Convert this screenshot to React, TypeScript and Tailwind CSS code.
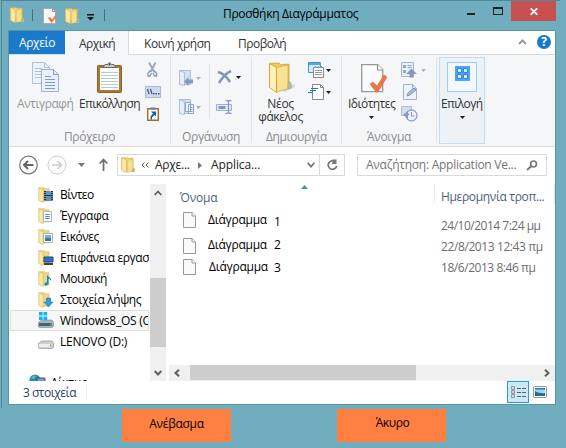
import React from "react";

type Kids = { children?: React.ReactNode };

function Label({ c = "", children }: Kids & { c?: string }) {
  return <div className={"whitespace-nowrap text-[12px] leading-[16px] " + c}>{children}</div>;
}

function Svg({ w, h, c = "", children }: Kids & { w: number; h: number; c?: string }) {
  return (
    <svg width={w} height={h} viewBox={`0 0 ${w} ${h}`} className={"block shrink-0 " + c} fill="none">
      {children}
    </svg>
  );
}

function Folder({ w = 13, h = 15, c = "" }: { w?: number; h?: number; c?: string }) {
  return (
    <svg width={w} height={h} viewBox="0 0 13 15" className={"block shrink-0 " + c}>
      <path d="M5 1h6.500v9l1.500 1v3L6 14z" fill="#e3bd4c" />
      <path d="M.5.8 6 .5l1 1 4-.5v10l-4 1H.5z" fill="#f2d57a" stroke="#d2ab42" strokeWidth=".5" />
      <path d="m.5.8 4.500 2v12L.5 12.600z" fill="#fbe9a6" stroke="#d9b650" strokeWidth=".6" />
      <path d="M6 3.200v11.300l5-1.200V2z" fill="#f7e08c" stroke="#d9b650" strokeWidth=".4" />
      <path d="M10.500 11h1.500v2.500h-1.500z" fill="#7fb4dc" />
    </svg>
  );
}

function Page({ c = "" }: { c?: string }) {
  return (
    <Svg w={13} h={16} c={c}>
      <path d="M.5.5h8.700l3.300 3.300v11.700H.5z" fill="#fafafa" stroke="#999" />
      <path d="M9 .5V4h3.500" stroke="#999" fill="#fff" />
    </Svg>
  );
}

function Down({ c = "text-[#1a1a1a]" }: { c?: string }) {
  return (
    <Svg w={5} h={3} c={c}>
      <path d="M0 0h5L2.500 3z" fill="currentColor" />
    </Svg>
  );
}

function GroupName({ c = "", children }: Kids & { c?: string }) {
  return <Label c={"mt-auto mb-[1px] text-center text-[#8c8c8e] " + c}>{children}</Label>;
}

function TitleBar() {
  return (
    <div className="flex h-[28px] items-start pl-[8px] pt-[5px]">
      <Folder w={14} h={16} />
      <div className="ml-[8px] mt-[2px] h-[12px] w-px bg-[#44717e]" />
      <Svg w={15} h={17} c="ml-[10px] mt-[1px]">
        <path d="M.5.5h9l3 3v12H.5z" fill="#f8f8f8" stroke="#aaa" />
        <path d="M9.500 .5v3h3" stroke="#999" />
        <path d="m5 10 2-1 2 2.500L12.500 7 14 8.500 8.500 15z" fill="#ea7646" />
      </Svg>
      <Folder w={14} h={16} c="ml-[7px] mt-[1px]" />
      <Svg w={7} h={7} c="ml-[8px] mt-[7px]">
        <path d="M0 0h7v1.500H0zM0 3h7L3.500 6.500z" fill="#111" />
      </Svg>
      <div className="ml-[10px] mt-[2px] h-[12px] w-px bg-[#44717e]" />
      <Label c="ml-[118px] mt-[-1px] tracking-[-0.3px] text-black">Προσθήκη Διαγράμματος</Label>
      <Svg w={8} h={2} c="ml-auto mt-[6px]">
        <path d="M0 0h8v2H0z" fill="#222" />
      </Svg>
      <div className="ml-[18px] h-[8px] w-[10px] border border-t-2 border-[#222]" />
      <div className="ml-[8px] mt-[-6px] mr-[10px] flex h-[20px] w-[45px] items-center justify-center bg-[#c75050]">
        <Svg w={8} h={7}>
          <path d="m.7.3 6.600 6.400M7.300.3.700 6.700" stroke="#fff" strokeWidth="1.700" />
        </Svg>
      </div>
    </div>
  );
}

function Tabs() {
  return (
    <div className="flex h-[24px] border-b border-[#dadbdc] bg-white">
      <div className="h-[23px] w-[56px] bg-[#1979ca] pt-[4px] text-center text-white">
        <Label c="tracking-[-0.4px]">Αρχείο</Label>
      </div>
      <div className="h-[24px] w-[64px] border-r border-[#dadbdc] bg-[#f5f6f7] pl-[14px] pt-[5px]">
        <Label c="tracking-[-0.5px] text-[#333]">Αρχική</Label>
      </div>
      <Label c="ml-[15px] mt-[5px] w-[94px] tracking-[-0.45px] text-[#333]">Κοινή χρήση</Label>
      <Label c="mt-[5px] tracking-[-0.5px] text-[#333]">Προβολή</Label>
      <Svg w={9} h={6} c="ml-auto mt-[8px]">
        <path d="m1 5 3.500-3.500L8 5" stroke="#999" strokeWidth="2" />
      </Svg>
      <div className="ml-[10px] mr-[4px] mt-[4px] flex size-[14px] items-center justify-center rounded-full bg-[#1979ca] text-[12px] font-bold leading-none text-white">
        ?
      </div>
    </div>
  );
}

function Clipboard() {
  return (
    <Svg w={25} h={31}>
      <rect x=".5" y="3.500" width="24" height="27" rx="1" fill="#a87734" stroke="#8d632b" />
      <path d="M3 6h19v22H3z" fill="#fff" />
      <path d="M4 10.500h17M4 13.500h17M4 16.500h17M4 19.500h17M4 22.500h17M4 25.500h17" stroke="#b3c9d5" />
      <path d="M6 5.500h13l-2-3h-2.500Q12.500-1 10.500 2.500H8z" fill="#ccc" stroke="#666" />
      <circle cx="12.500" cy="2.500" r="1" fill="#444" />
    </Svg>
  );
}

function ClipGroup() {
  return (
    <div className="flex h-full w-[161px] flex-col">
      <div className="flex">
        <div className="ml-[8px] mt-[7px] w-[61px]">
          <Svg w={28} h={31} c="ml-[15px]">
            <path d="M.5.500h12l5 5v16H.5z" fill="#edf3fc" stroke="#b1c1dd" />
            <path d="M12.500.5v5h5M3 6.500h7M3 9.500h7M3 12.500h7M3 15.500h7" stroke="#b1c1dd" />
            <path d="M9.500 7.500h12l5 5v17h-17z" fill="#e9f1fc" stroke="#9eb1d3" />
            <path d="M21.500 7.500v5h5M13 14.500h6M13 17.500h10M13 20.500h10M13 23.500h10M13 26.500h10" stroke="#7f98c4" />
          </Svg>
          <Label c="mt-[3px] tracking-[-0.45px] text-[#969698]">Αντιγραφή</Label>
        </div>
        <div className="mt-[7px] w-[67px]">
          <div className="ml-[19px]"><Clipboard /></div>
          <Label c="ml-[1px] mt-[3px] tracking-[-0.6px] text-[#333]">Επικόλληση</Label>
        </div>
        <div className="mt-[7px] flex flex-col">
          <Svg w={11} h={15} c="ml-[2px]">
            <path d="m2 .5 5.500 10M8.500.5 3.500 10" stroke="#9aa9c5" strokeWidth="2" />
            <path d="M3.500 8.500 1 11v3h2l1.500-3M7 8.500l2.500 2.500v3h-2L6 11" stroke="#8197bf" strokeWidth="1.300" />
          </Svg>
          <Svg w={16} h={12} c="mt-[9px]">
            <rect x=".5" y=".5" width="15" height="11" fill="#cfdaec" stroke="#aab9d4" />
            <path d="m2.500 3 1.500 5M5.500 3 7 8" stroke="#3e5482" strokeWidth="1.200" />
            <path d="M8 7h1.500v1.500H8zM10.500 7H12v1.500h-1.500zM13 7h1.500v1.500H13z" fill="#3e5482" />
          </Svg>
          <Svg w={12} h={14} c="ml-[2px] mt-[9px]">
            <path d="M.7 1.700h10.600v11.600H.7z" fill="#fff" stroke="#9a6d32" strokeWidth="1.400" />
            <path d="M3.500.500h5v2h-5z" fill="#777" />
            <path d="M4 4.500h5v5L7.500 8 5 10.500v2H3.500v-3L6 6.500z" fill="#1260a8" />
          </Svg>
        </div>
      </div>
      <GroupName c="tracking-[-0.35px]">Πρόχειρο</GroupName>
    </div>
  );
}

function FolderBlue({ copy = false }: { copy?: boolean }) {
  return (
    <Svg w={15} h={16}>
      <path d="M.5.500h11v14H.5z" fill="#d5e0f1" stroke="#aebfdb" />
      <path d="m.5.500 5 2v13l-5-1z" fill="#e6eefa" stroke="#aebfdb" />
      {copy ? (
        <path d="M6.500 3.500h5v9h-5zM9.500 5.500h5v9h-5zM11 8.500h2.500M11 10.500h2.500M11 12.500h2.500" fill="#f1f6fd" stroke="#8ea4ca" />
      ) : (
        <path d="M5 11.500 9.500 7v2.500H14v4H9.500V16z" fill="#839bc2" />
      )}
    </Svg>
  );
}

function OrganizeGroup() {
  return (
    <div className="flex h-full w-[80px] flex-col">
      <div className="flex">
        <div className="ml-[8px] mt-[15px] flex w-[30px] flex-col gap-[13px]">
          <div className="flex items-center gap-[2px]"><FolderBlue /><Down c="text-[#b3b3b5]" /></div>
          <div className="flex items-center gap-[2px]"><FolderBlue copy /><Down c="text-[#b3b3b5]" /></div>
        </div>
        <div className="mt-[9px] h-[55px] w-px bg-[#e2e3e4]" />
        <div className="ml-[7px] mt-[15px]">
          <div className="flex items-center gap-[4px]">
            <Svg w={15} h={15}>
              <path d="M1 2c4 1 9 5 12 10M14 1C9 3 5 8 2 13" stroke="#8296bb" strokeWidth="2.500" />
            </Svg>
            <Down />
          </div>
          <Svg w={17} h={14} c="mt-[15px] ml-[-1px]">
            <path d="M.5 4.500h15v6H.5z" fill="#e2ebf8" stroke="#9dafd0" />
            <path d="M2.500 6h7v3h-7z" fill="#7e96c0" />
            <path d="M9.500.5h2l1 1 1-1h2M9.500 13.500h2l1-1 1 1h2M12.500 1v12" stroke="#8197bf" strokeWidth="1.300" />
          </Svg>
        </div>
      </div>
      <GroupName c="tracking-[-0.3px]">Οργάνωση</GroupName>
    </div>
  );
}

function NewGroup() {
  return (
    <div className="flex h-full w-[89px] flex-col">
      <div className="flex">
        <div className="mt-[7px] w-[56px] text-center">
          <Svg w={28} h={31} c="ml-[16px]">
            <path d="M14 29 26 22l1 3-10 5z" fill="#d9d9d9" />
            <path d="M1.500 1.500 11 1l1.500 1.500 8.500-.3V20l2 2v4L9 29 1.500 25z" fill="#eccb63" stroke="#d0a334" strokeWidth=".8" />
            <path d="M8 5.500 20 3v23.500L9 30z" fill="#f8e293" stroke="#d3a83c" strokeWidth=".7" />
            <path d="m1.500 1.500 7 4V30.500l-7-5z" fill="#fdf0b8" stroke="#d0a334" strokeWidth=".9" />
            <path d="M20 21.500c0-2 3-2 3 0V26l-3 1z" fill="#8cc3ee" stroke="#d0a334" strokeWidth=".6" />
          </Svg>
          <Label c="mt-[3px] ml-[1px] tracking-[-0.35px] text-[#333]">Νέος</Label>
          <Label c="mt-[-3px] ml-[1px] tracking-[-0.4px] text-[#333]">φάκελος</Label>
        </div>
        <div className="mt-[7px]">
          <div className="flex items-center gap-[2px]">
            <Svg w={16} h={16}>
              <path d="M.5.500h12v10H.5z" fill="#d2edfa" stroke="#4193d2" />
              <path d="M1 1h12v2H1z" fill="#4fa9e0" />
              <path d="M5.500 5.500h10v10h-10z" fill="#fff" stroke="#888" />
              <path d="M7 8.500h7M7 10.500h7M7 12.500h7M7.500 4v2M10.500 4v2M13.500 4v2" stroke="#999" />
            </Svg>
            <Down />
          </div>
          <div className="mt-[6px] flex items-center gap-[2px]">
            <Svg w={16} h={16}>
              <path d="M4.500.5h8l3 3v12h-11z" fill="#fff" stroke="#888" />
              <path d="M12.500.5v3h3" stroke="#888" />
              <path d="M3 4.500h7M2 6.500h6M0 8.500h5" stroke="#1b75d0" />
            </Svg>
            <Down />
          </div>
        </div>
      </div>
      <GroupName c="tracking-[-0.4px]">Δημιουργία</GroupName>
    </div>
  );
}

function OpenGroup() {
  return (
    <div className="flex h-full w-[94px] flex-col">
      <div className="flex">
        <div className="ml-[6px] mt-[9px] w-[53px]">
          <Svg w={27} h={29} c="ml-[13px]">
            <path d="M.7.700h16l5 5v22h-21z" fill="#fbfbfb" stroke="#999" strokeWidth="1.300" />
            <path d="M16.500.5v5.500h5.500" fill="#fff" stroke="#888" />
            <path d="m9 20 3-2 4 4 7-11 3 2-9 15h-2z" fill="#ee7440" stroke="#d85f2d" strokeWidth=".5" />
          </Svg>
          <Label c="mt-[3px] tracking-[-0.55px] text-[#333]">Ιδιότητες</Label>
          <div className="ml-[21px] mt-[4px]"><Down /></div>
        </div>
        <div className="mt-[7px] flex flex-col">
          <div className="flex items-center gap-[4px]">
            <Svg w={16} h={16}>
              <path d="M.5.500h12v14H.5z" fill="#e9f0fa" stroke="#a4b5d3" />
              <path d="M2 3h3v3H2zM2 8h3v3H2z" fill="#8fa6cc" />
              <path d="M6.500 3.500h4M6.500 5.500h4" stroke="#8fa6cc" />
              <path d="M5 12h3.500v3.500h4V12H16l-5.500-5.500z" fill="#8399c0" />
            </Svg>
            <Down c="text-[#b3b3b5]" />
          </div>
          <Svg w={14} h={16} c="ml-[2px] mt-[6px]">
            <path d="M.5.500h9l4 4v11H.5z" fill="#edf3fb" stroke="#a0b1d0" />
            <path d="M9.500.5v4h4" stroke="#a0b1d0" />
            <path d="m4 12 1-3 6-5 2 2-6 5z" fill="#aabbd8" stroke="#8399c0" />
          </Svg>
          <Svg w={17} h={16} c="mt-[6px]">
            <path d="M.5.500h10v9H.5z" fill="#d3def0" stroke="#afbfda" />
            <circle cx="10.500" cy="9.500" r="5.500" fill="#eaf1fb" stroke="#8da2c7" strokeWidth="1.300" />
            <path d="M10.500 6v4h3" stroke="#7f96be" />
            <path d="m2 9 5-4v2.500c2 0 1 2 0 2v3z" fill="#8399c0" />
          </Svg>
        </div>
      </div>
      <GroupName c="tracking-[-0.3px]">Άνοιγμα</GroupName>
    </div>
  );
}

function Ribbon() {
  const line = <div className="mt-[2px] h-[86px] w-px shrink-0 bg-[#e2e3e4]" />;
  return (
    <div className="flex h-[92px] border-b border-[#dadbdc] bg-[#f5f6f7]">
      <ClipGroup />
      {line}
      <OrganizeGroup />
      {line}
      <NewGroup />
      {line}
      <OpenGroup />
      {line}
      <div className="ml-[2px] mt-[2px] h-[87px] w-[46px] border border-[#c2dcf3] bg-[#edf2f6]">
        <div className="ml-[7px] mt-[4px] flex h-[30px] w-[30px] justify-center border border-[#99ccf8] bg-[#f4f8fc] pt-[3px]">
          <Svg w={15} h={15}>
            <path d="M0 0h15v15H0z" fill="#4da6f5" />
            <path d="M2.500 2.500h4v4h-4zM8.500 2.500h4v4h-4zM2.500 8.500h4v4h-4zM8.500 8.500h4v4h-4z" fill="#d5edff" stroke="#2788dd" />
          </Svg>
        </div>
        <Label c="ml-[1px] mt-[4px] tracking-[-0.6px] text-[#333]">Επιλογή</Label>
        <div className="ml-[20px] mt-[4px]"><Down /></div>
      </div>
    </div>
  );
}

function AddressBar() {
  return (
    <div className="flex h-[37px] items-start pt-[7px]">
      <Svg w={20} h={20} c="ml-[9px] mt-[1px]">
        <circle cx="10.500" cy="10" r="8.800" stroke="#777" strokeWidth="1.200" />
        <path d="M6 10h9.500M10 6l-4 4 4 4" stroke="#666" strokeWidth="2" />
      </Svg>
      <Svg w={20} h={20} c="ml-[9px] mt-[1px]">
        <circle cx="10" cy="10" r="9" stroke="#ccc" />
        <path d="M5 10h9.500M10.500 6l4 4-4 4" stroke="#ccc" strokeWidth="1.500" />
      </Svg>
      <Svg w={7} h={4} c="ml-[11px] mt-[9px]"><path d="M0 0h7L3.500 4z" fill="#777" /></Svg>
      <Svg w={9} h={13} c="ml-[14px] mt-[4px]">
        <path d="M4.500 13V2M.7 5.500l3.800-4 3.800 4" stroke="#707070" strokeWidth="1.800" />
      </Svg>
      <div className="ml-[9px] flex h-[22px] w-[228px] items-center border border-[#d9d9d9]">
        <Folder w={14} h={16} c="ml-[3px]" />
        <Svg w={8} h={6} c="ml-[6px]">
          <path d="M3.500.5 1 3l2.500 2.500M7.500.5 5 3l2.500 2.500" stroke="#555" />
        </Svg>
        <Label c="ml-[6px] w-[36px] tracking-[-0.25px] text-[#222]">Αρχε...</Label>
        <Svg w={4} h={7} c="ml-[7px]"><path d="M0 0v7l4-3.500z" fill="#777" /></Svg>
        <Label c="ml-[9px] tracking-[-0.1px] text-[#222]">Applica...</Label>
        <Svg w={8} h={6} c="ml-auto mr-[4px]"><path d="m.7.700 3.300 4 3.300-4" stroke="#777" strokeWidth="1.800" /></Svg>
        <div className="flex h-full w-[25px] items-center justify-center border-l border-[#d9d9d9]">
          <Svg w={11} h={12}>
            <path d="M8 2.500A4.300 4.300 0 1 0 9.700 7" stroke="#777" strokeWidth="1.700" />
            <path d="M6 .5h3.500V5H5z" fill="#777" />
          </Svg>
        </div>
      </div>
      <div className="ml-[12px] flex h-[22px] w-[190px] items-center border border-[#d9d9d9]">
        <Label c="ml-[8px] tracking-[-0.26px] text-[#747474]">Αναζήτηση: Application Ve...</Label>
        <Svg w={12} h={11} c="ml-auto mr-[8px]">
          <circle cx="7.500" cy="4" r="3" stroke="#777" strokeWidth="1.700" />
          <path d="m5.500 6-4.500 4" stroke="#777" strokeWidth="2" />
        </Svg>
      </div>
    </div>
  );
}

const overlays: Record<string, React.ReactNode> = {
  video: (
    <>
      <path d="M6 4h9v10H6z" fill="#333" />
      <path d="M8 4h5v4H8z" fill="#4aa0e0" /><path d="M8 9h5v5H8z" fill="#5f8fbb" />
      <path d="M7 5v9M14 5v9" stroke="#ddd" strokeDasharray="1 1" />
    </>
  ),
  docs: (
    <>
      <path d="M5.500 3.500h8v10h-8z" fill="#fff" stroke="#a7b5c5" />
      <path d="M7 6.500h5M7 8.500h5M7 10.500h5" stroke="#5b92ce" />
    </>
  ),
  pics: (
    <>
      <path d="M5.500 4.500h9v9h-9z" fill="#fff" stroke="#9fb3c5" />
      <path d="M7 6h6v3H7z" fill="#6bb5e8" /><path d="M7 9h6v3H7z" fill="#3d7f6c" />
    </>
  ),
  desk: (
    <>
      <path d="M6 7h9v5H6z" fill="#2275d0" stroke="#284563" /><path d="M6 13h9v2H6z" fill="#444" />
    </>
  ),
  music: <path d="M9 4c1 2 5 3 4 6-.5-1.500-1.500-2-2.500-2.200V13c-2 3-5 1.500-4-.5.500-1 1.500-1 2.500-1z" fill="#1685d8" />,
  down: <path d="M8.500 6h4v4H15l-4.500 5L6 10h2.500z" fill="#2e9ce6" stroke="#1672b5" strokeWidth=".6" />,
};

function NavFolder({ kind }: { kind: string }) {
  return (
    <Svg w={16} h={16}>
      <path d="M1 .7h5.500l1 1H11V14H5z" fill="#f0d583" stroke="#d9b85a" strokeWidth=".6" />
      <path d="m.8.800 4.400 2v12.700L.8 13.500z" fill="#fbe9ac" stroke="#d9b85a" strokeWidth=".7" />
      {overlays[kind]}
    </Svg>
  );
}

function Drive({ os = false }: { os?: boolean }) {
  return (
    <Svg w={16} h={17}>
      {os && <path d="M1 0h3.700v3.600H1zM5.500 0h3.700v3.600H5.500zM1 4.400h3.700V8H1zM5.500 4.400h3.700V8H5.500z" fill="#10b5ef" />}
      <path d="m2 9 2-1h10l1.500 2v4.500l-1.500 1H1.500L0 14.500V11z" fill={os ? "#a9b4bb" : "#cfcfcf"} stroke="#888" strokeWidth=".6" />
      <path d="M1 11h13v3H1z" fill={os ? "#3d6878" : "#eee"} />
      <path d="M12 11.500h1.500v2H12z" fill="#52c145" />
    </Svg>
  );
}

const places: [string, string, string][] = [
  ["video", "Βίντεο", "tracking-[-0.55px]"],
  ["docs", "Έγγραφα", "tracking-[-0.25px]"],
  ["pics", "Εικόνες", "tracking-[-0.5px]"],
  ["desk", "Επιφάνεια εργασ", "tracking-[-0.38px]"],
  ["music", "Μουσική", "tracking-[-0.5px]"],
  ["down", "Στοιχεία λήψης", "tracking-[-0.38px]"],
  ["os", "Windows8_OS (C:)", "tracking-[-0.25px]"],
  ["drive", "LENOVO (D:)", "tracking-[-0.25px]"],
];

function NavPane() {
  return (
    <div className="h-[197px] w-[140px] overflow-hidden pl-[1px]">
      {places.map(([kind, name, track]) => (
        <div
          key={kind}
          className={
            "flex h-[21px] items-center overflow-hidden pl-[28px] " +
            (kind === "os" ? "bg-[#f7f7f7] outline outline-1 -outline-offset-1 outline-[#dedede]" : "")
          }
        >
          {kind === "os" || kind === "drive" ? <Drive os={kind === "os"} /> : <NavFolder kind={kind} />}
          <Label c={"ml-[6px] text-black " + track}>{name}</Label>
        </div>
      ))}
      <div className="flex items-start pl-[19px] pt-[22px]">
        <Svg w={17} h={16}>
          <circle cx="6" cy="6" r="5.500" fill="#2d83d3" />
          <path d="M2 4c2-3 4-3 5-2L5 5z" fill="#6cca62" />
          <path d="M8 4h8v7H8z" fill="#5aa5e0" stroke="#556" />
        </Svg>
        <Label c="ml-[5px] mt-[1px] text-black">Δίκτυο</Label>
      </div>
    </div>
  );
}

function NavScroll() {
  return (
    <div className="flex h-[197px] w-[16px] flex-col items-center bg-[#f0f0f0]">
      <Svg w={8} h={6} c="mt-[6px]"><path d="m.7 5 3.300-3.500L7.300 5" stroke="#606060" strokeWidth="1.800" /></Svg>
      <div className="mt-[82px] h-[69px] w-full bg-[#cdcdcd]" />
      <Svg w={8} h={6} c="mb-[5px] mt-auto"><path d="m.7 1 3.300 3.500L7.300 1" stroke="#606060" strokeWidth="2" /></Svg>
    </div>
  );
}

function FileList() {
  return (
    <div className="flex h-[181px]">
      <div className="w-[265px] pl-[11px]">
        <Svg w={7} h={4} c="ml-[121px] mt-[1px]"><path d="M0 4 3.500 0 7 4z" fill="#4b8bb5" /></Svg>
        <Label c="mt-[1px] tracking-[-0.2px] text-[#4c607a]">Όνομα</Label>
        <div className="mt-[6px] flex h-[16px] pl-[3px]">
          <Page />
          <Label c="ml-[12px] w-[66px] tracking-[-0.25px] text-black">Διάγραμμα</Label>
          <Label c="mt-[2px] text-black">1</Label>
        </div>
        <div className="mt-[10px] flex h-[16px] pl-[3px]">
          <Page />
          <Label c="ml-[12px] mt-[-1px] w-[66px] tracking-[-0.25px] text-black">Διάγραμμα</Label>
          <Label c="mt-[-1px] text-black">2</Label>
        </div>
        <div className="mt-[5px] flex h-[16px] pl-[3px]">
          <Page />
          <Label c="ml-[13px] w-[65px] tracking-[-0.25px] text-black">Διάγραμμα</Label>
          <Label c="mt-[1px] text-black">3</Label>
        </div>
      </div>
      <div className="h-[20px] w-px bg-gradient-to-b from-[#d5e6f5] to-[#eef5fb]" />
      <div className="w-[119px] pl-[6px] pt-[5px]">
        <Label c="tracking-[-0.35px] text-[#4c607a]">Ημερομηνία τροπ...</Label>
        <div className="mt-[13px] flex flex-col gap-[5px]">
          <Label c="tracking-[-0.5px] text-[#6d6d6d]">24/10/2014 7:24 μμ</Label>
          <Label c="tracking-[-0.4px] text-[#6d6d6d]">22/8/2013 12:43 πμ</Label>
          <Label c="tracking-[-0.45px] text-[#6d6d6d]">18/6/2013 8:46 πμ</Label>
        </div>
      </div>
      <div className="h-[20px] w-px bg-[#d5e6f5]" />
    </div>
  );
}

function ListScroll() {
  return (
    <div className="flex h-[16px] items-start bg-[#f0f0f0]">
      <Svg w={6} h={8} c="ml-[5px] mt-[4px]"><path d="M5 .7 1.500 4 5 7.300" stroke="#606060" strokeWidth="2" /></Svg>
      <div className="ml-[10px] h-[15px] w-[226px] bg-[#cdcdcd]" />
      <Svg w={6} h={8} c="ml-auto mr-[5px] mt-[4px]"><path d="M1 .7 4.500 4 1 7.300" stroke="#606060" strokeWidth="2" /></Svg>
    </div>
  );
}

function StatusBar() {
  return (
    <div className="flex h-[22px] items-start">
      <Label c="ml-[14px] mt-[4px] w-[63px] tracking-[-0.5px] text-[#26436b]">3 στοιχεία</Label>
      <div className="mt-[5px] h-[12px] w-px bg-[#eee]" />
      <div className="ml-auto flex h-[22px] w-[22px] items-center justify-center border border-[#2a9ad6] bg-[#cbe8f6]">
        <Svg w={15} h={13}>
          <path d="M.5.500h3v3h-3zM.5 4.500h3v3h-3zM.5 8.500h3v3h-3z" fill="#fff" stroke="#8a9aa5" />
          <path d="M1.500 5.500h1v1h-1z" fill="#d00" /><path d="M1.500 1.500h1v1h-1zM1.500 9.500h1v1h-1z" fill="#385" />
          <path d="M6 2.500h4M11 2.500h4M6 6.500h4M11 6.500h4M6 10.500h4M11 10.500h4" stroke="#555f70" />
        </Svg>
      </div>
      <Svg w={14} h={12} c="ml-[4px] mr-[8px] mt-[5px]">
        <rect x=".5" y=".5" width="13" height="11" rx="1" fill="#fff" stroke="#8796a8" />
        <path d="M2 2h10v8H2z" fill="#9cd3ef" />
        <path d="M2 2h10v1.500H2z" fill="#3272b5" />
        <path d="M2 5c3 2 6 2.500 10 2v3H2z" fill="#267078" />
      </Svg>
    </div>
  );
}

export default function App() {
  return (
    <div className="h-[448px] w-[566px] overflow-hidden bg-[#6fadbf] font-['Open_Sans','Noto_Sans',sans-serif]">
      <div className="ml-[1px] h-[408px] border-l border-[#4f8795]">
        <div className="h-[2px] w-[558px] border-t border-[#4f8795]" />
        <TitleBar />
        <div className="ml-[6px] h-[375px] w-[548px] border border-[#5b93a1] bg-white">
          <Tabs />
          <Ribbon />
          <AddressBar />
          <div className="flex h-[197px]">
            <NavPane />
            <div className="ml-[1px]"><NavScroll /></div>
            <div className="ml-[3px] flex-1 overflow-hidden">
              <FileList />
              <ListScroll />
            </div>
          </div>
          <StatusBar />
        </div>
      </div>
      <div className="mt-[1px] flex pl-[122px]">
        <button className="h-[33px] w-[109px] bg-[#ff8040] pb-[3px] text-[12px] leading-[16px] tracking-[-0.3px] text-black">Ανέβασμα</button>
        <button className="ml-[106px] h-[33px] w-[109px] bg-[#ff8040] pb-[5px] pl-[2px] text-[12px] leading-[16px] tracking-[-0.4px] text-black">Άκυρο</button>
      </div>
    </div>
  );
}
